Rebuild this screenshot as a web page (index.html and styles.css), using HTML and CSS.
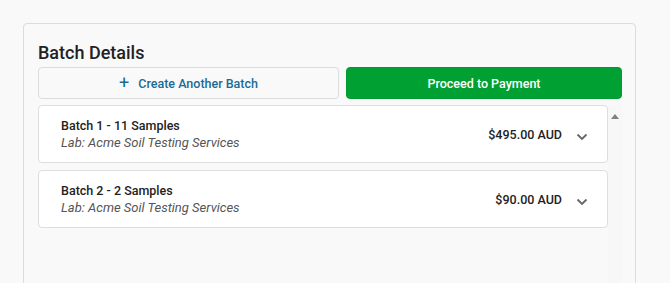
FILE: index.html
```html
<!DOCTYPE html>
<html lang="en">
<head>
    <title>Batch Details</title>
    <link rel="stylesheet" href="styles.css">
</head>
<body>
    <div class="panel">
        <h2 class="title">Batch Details</h2>
        <div class="actions">
            <button class="btn btn-outline"><span class="plus">+</span> Create Another Batch</button>
            <button class="btn btn-green">Proceed to Payment</button>
        </div>
        <div class="scroller">
            <div class="batches">
                <div class="batch">
                    <div class="batch-info">
                        <div class="batch-name">Batch 1 - 11 Samples</div>
                        <div class="batch-lab">Lab: Acme Soil Testing Services</div>
                    </div>
                    <div class="batch-price">$495.00 AUD</div>
                    <svg class="chevron" width="12" height="8" viewBox="0 0 12 8"><path d="M1.5 1.5 L6 6 L10.5 1.5" fill="none" stroke="#666" stroke-width="1.8"/></svg>
                </div>
                <div class="batch">
                    <div class="batch-info">
                        <div class="batch-name">Batch 2 - 2 Samples</div>
                        <div class="batch-lab">Lab: Acme Soil Testing Services</div>
                    </div>
                    <div class="batch-price">$90.00 AUD</div>
                    <svg class="chevron" width="12" height="8" viewBox="0 0 12 8"><path d="M1.5 1.5 L6 6 L10.5 1.5" fill="none" stroke="#666" stroke-width="1.8"/></svg>
                </div>
            </div>
            <div class="scrollbar">
                <div class="arrow-up"></div>
            </div>
        </div>
    </div>
</body>
</html>
```
FILE: styles.css
```css
body {
    margin: 0;
    padding: 23px 0 0 23px;
    height: 283px;
    box-sizing: border-box;
    overflow: hidden;
    background-color: #f9f9f9;
    font-family: Roboto, "Liberation Sans", sans-serif;
    color: #222;
}

.panel {
    width: 613px;
    height: 320px;
    box-sizing: border-box;
    border: 1px solid #dcdcdc;
    border-radius: 4px;
    background-color: #f9f9f9;
    padding: 17px 13px 0 14px;
}

.title {
    margin: 0 0 2px;
    font-size: 18px;
    line-height: 24px;
    font-weight: 500;
    color: #222;
}

.actions {
    display: grid;
    grid-template-columns: 301px 1fr;
    gap: 7px;
}

.btn {
    height: 32px;
    border-radius: 4px;
    font-family: Roboto, "Liberation Sans", sans-serif;
    font-size: 12.5px;
    font-weight: 500;
    cursor: pointer;
}

.btn-outline {
    background-color: #f9f9f9;
    border: 1px solid #dcdcdc;
    color: #1b6b94;
}

.plus {
    font-size: 18px;
    font-weight: 400;
    line-height: 14px;
    margin-right: 6px;
    position: relative;
    top: 1px;
}

.btn-green {
    background-color: #00a033;
    border: 1px solid #009a31;
    color: #fff;
}

.scroller {
    display: flex;
    margin-top: 6px;
}

.batches {
    flex: 1;
    display: flex;
    flex-direction: column;
    gap: 7px;
}

.batch {
    display: flex;
    align-items: center;
    background-color: #fff;
    border: 1px solid #dedede;
    border-radius: 4px;
    padding: 11px 19px 11px 22px;
}

.batch-info {
    flex: 1;
}

.batch-name {
    font-size: 12.5px;
    line-height: 17px;
    font-weight: 500;
    color: #222;
}

.batch-lab {
    font-size: 13px;
    line-height: 17px;
    font-style: italic;
    color: #555;
}

.batch-price {
    font-size: 12.5px;
    font-weight: 500;
    color: #222;
    margin-right: 14px;
}

.chevron {
    margin-top: 5px;
}

.scrollbar {
    width: 14px;
    background-color: #f7f7f7;
    height: 220px;
}

.arrow-up {
    width: 0;
    height: 0;
    margin: 9px auto 0;
    border-left: 4px solid transparent;
    border-right: 4px solid transparent;
    border-bottom: 5px solid #808080;
}
```
